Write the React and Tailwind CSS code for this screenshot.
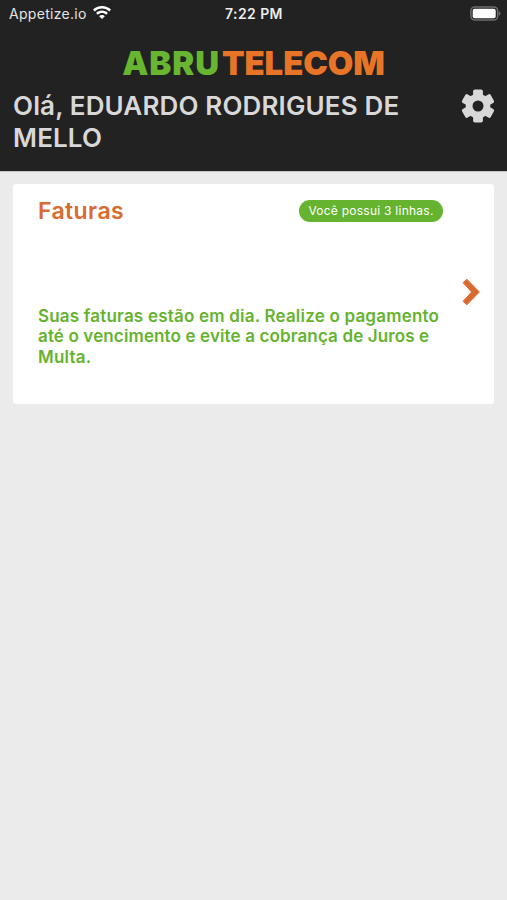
const user = { name: 'EDUARDO RODRIGUES DE MELLO', lines: 3 };

const WifiIcon = () => (
    <svg width="18" height="14" viewBox="0 0 18 14" fill="#fff">
        <path d="M9 0C5.500 0 2.400 1.400 0 3.600L1.700 5.400C3.600 3.600 6.200 2.500 9 2.500s5.400 1.100 7.300 2.900L18 3.600C15.600 1.400 12.500 0 9 0z" />
        <path d="M9 4.600c-2.300 0-4.300.9-5.900 2.300l1.700 1.800C5.900 7.700 7.400 7.100 9 7.100s3.100.6 4.200 1.600l1.700-1.800C13.300 5.500 11.300 4.600 9 4.600z" />
        <path d="M9 9.100c-1.100 0-2.100.4-2.800 1.100L9 13.100l2.800-2.900C11.100 9.500 10.100 9.100 9 9.100z" />
    </svg>
);

const BatteryIcon = () => (
    <svg width="31" height="15" viewBox="0 0 31 15" fill="none">
        <rect x="0.900" y="0.900" width="26.800" height="13.200" rx="4" stroke="#6c6c6c" strokeWidth="1.500" />
        <rect x="2.700" y="2.700" width="23" height="9.600" rx="2" fill="#fff" />
        <path d="M28.800 5.300c1.200.5 1.700 1.200 1.700 2.200s-.5 1.700-1.700 2.200z" fill="#6c6c6c" />
    </svg>
);

const GearIcon = () => (
    <svg className="-mt-px shrink-0" width="34" height="34" viewBox="-17 -17 34 34" fill="#d8d8d8">
        <rect x="-4.900" y="-16.500" width="9.800" height="33" rx="1.800" />
        <rect x="-4.900" y="-16.500" width="9.800" height="33" rx="1.800" transform="rotate(60)" />
        <rect x="-4.900" y="-16.500" width="9.800" height="33" rx="1.800" transform="rotate(120)" />
        <circle r="12.300" />
        <circle r="5.500" fill="#222222" />
    </svg>
);

const ChevronIcon = () => (
    <svg className="-mt-[4px] ml-auto shrink-0" width="18" height="28" viewBox="0 0 18 28">
        <path
            d="M1.100 4.700 4.800 1.200 17.300 14 4.800 26.800 1.100 23.300 9.600 14z"
            fill="#d96a30"
            stroke="#d96a30"
            strokeLinejoin="round"
        />
    </svg>
);

const StatusBar = () => (
    <div className="grid h-[26px] grid-cols-3 items-center pl-[9px] pr-[6px] text-[14px] text-white">
        <div className="flex items-center gap-[6px]">
            <span className="tracking-[0.3px] text-[#e4e4e4]">Appetize.io</span>
            <WifiIcon />
        </div>
        <span className="-ml-[2px] text-center font-semibold tracking-[0.4px] text-[#ececec]">7:22 PM</span>
        <div className="flex justify-end">
            <BatteryIcon />
        </div>
    </div>
);

const Header = () => (
    <header className="h-[171px] bg-[#222222]">
        <StatusBar />
        <div className="flex h-16 items-center justify-center gap-[2px] pt-[10px] text-[33px] font-black leading-none">
            <span className="tracking-[0.9px] text-[#67b530]">ABRU</span>
            <span className="tracking-[-0.1px] text-[#e87427]">TELECOM</span>
        </div>
        <div className="flex justify-between pl-[13px] pr-3">
            <h1 className="w-[400px] text-[26px] font-semibold leading-8 tracking-[0.15px] text-[#d8d8d8]">
                {`Olá, ${user.name}`}
            </h1>
            <GearIcon />
        </div>
    </header>
);

const InvoiceCard = () => (
    <section className="flex h-[220px] items-center rounded-[3px] bg-white pl-[25px] pr-[14px]">
        <div className="h-full w-[405px] pt-[15px]">
            <div className="flex items-center justify-between">
                <h2 className="text-[23px] font-semibold leading-[25px] tracking-[0.4px] text-[#d96a30]">Faturas</h2>
                <span className="-mt-[2px] flex h-[22px] w-[144px] items-center justify-center whitespace-nowrap rounded-full bg-[#65b32e] text-[12px] tracking-[0.25px] text-white">
                    {`Você possui ${user.lines} linhas.`}
                </span>
            </div>
            <p className="w-[410px] pt-[81.5px] text-[17px] font-semibold leading-[20.5px] tracking-[0.2px] text-[#65b32e]">
                Suas faturas estão em dia. Realize o pagamento
                <br />
                <span className="tracking-[0.13px]">até o vencimento e evite a cobrança de Juros e</span>
                <br />
                Multa.
            </p>
        </div>
        <ChevronIcon />
    </section>
);

export default function App() {
    return (
        <div className="min-h-[900px] w-full bg-[#ebebeb] font-['Inter','Liberation_Sans',sans-serif]">
            <Header />
            <main className="border-t border-[#c4c4c4] px-[13px] pt-3">
                <InvoiceCard />
            </main>
        </div>
    );
}
